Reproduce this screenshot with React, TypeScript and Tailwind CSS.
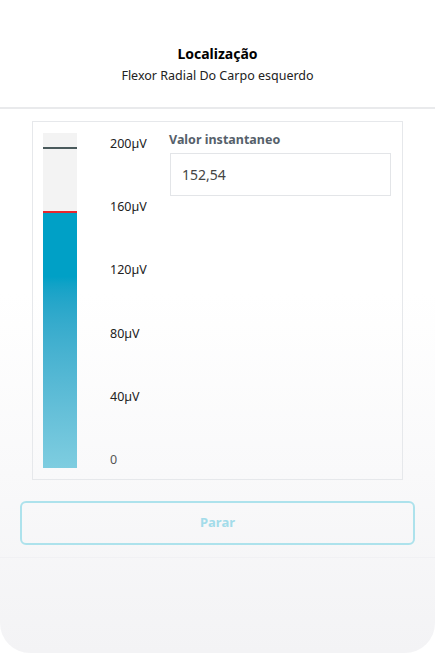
import React from "react";

const TICKS = ["200µV", "160µV", "120µV", "80µV", "40µV", "0"];

export default function App() {
  return (
    <div className="w-[435px] h-[653px] bg-white" style={{ fontFamily: '"Noto Sans", "Open Sans", sans-serif' }}>
      <div className="h-full flex flex-col rounded-b-[30px] overflow-hidden bg-gradient-to-b from-white from-45% to-[#f3f3f5]">
        {/* Header */}
        <div className="h-[109px] shrink-0 bg-white border-b-2 border-[#e9eaec] flex flex-col items-center justify-center pt-[22px]">
          <h1 className="text-[14px] font-bold text-black leading-[20px]">Localização</h1>
          <p className="text-[12.5px] text-[#222] leading-[20px] mt-[2px]">Flexor Radial Do Carpo esquerdo</p>
        </div>

        {/* Card */}
        <div className="mx-[32px] mt-[12px] h-[359px] border border-[#e6e8eb] flex pl-[10px] pt-[11px] pb-[11px]">
          <div className="w-[34px] flex flex-col bg-[#f3f3f3]">
            <div className="h-[14px]" />
            <div className="h-[2px] bg-[#4a5a5c]" />
            <div className="h-[62px]" />
            <div className="h-[2px] bg-[#e8262c]" />
            <div className="flex-1 bg-gradient-to-b from-[#00a0c6] from-25% to-[#7ecde0]" />
          </div>
          <div className="w-[60px] ml-[33px] flex flex-col justify-between text-[12.5px] text-[#222] leading-[16px] pt-[3px]">
            {TICKS.map((t) => (
              <span key={t} className={t === "0" ? "text-[#555]" : ""}>{t}</span>
            ))}
          </div>
          <div className="flex-1 pr-[11px] -ml-[1px]">
            <div className="text-[12.5px] font-bold text-[#55606a] leading-[16px] -mt-[1px]">Valor instantaneo</div>
            <div className="mt-[5px] h-[43px] border border-[#e3e5e8] flex items-center px-[11px] text-[14px] text-[#444] ml-[1px]">
              152,54
            </div>
          </div>
        </div>

        {/* Button */}
        <div className="px-[20px] mt-[21px] pb-[12px] border-b border-[#f1f1f4]">
          <button className="w-full h-[44px] rounded-[6px] border-2 border-[#ade2ec] text-[#a3dcea] font-bold text-[13px]">
            Parar
          </button>
        </div>
      </div>
    </div>
  );
}
